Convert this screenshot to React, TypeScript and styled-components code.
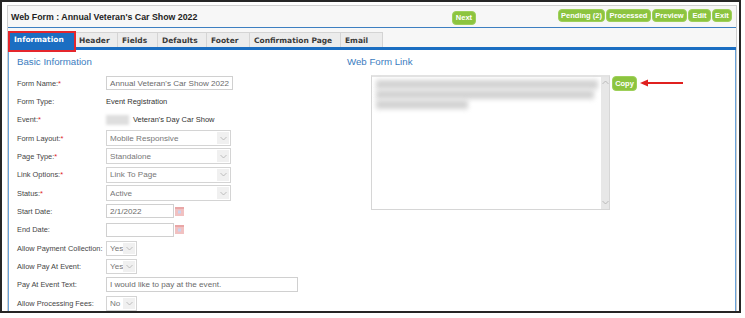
import React from "react";
import styled, { createGlobalStyle } from "styled-components";

const GlobalStyle = createGlobalStyle`
  html, body { margin: 0; padding: 0; background: #fff; }
  body { font-family: "Liberation Sans", Arial, sans-serif; }
`;

const Frame = styled.div`
  width: 741px;
  height: 313px;
  box-sizing: border-box;
  border: 2px solid #262626;
  padding: 3px 2px 0 5px;
  display: flex;
  background: #fff;
  overflow: hidden;
`;

const Panel = styled.div`
  flex: 1;
  min-width: 0;
  display: flex;
  flex-direction: column;
  border: 1px solid #cfcfcf;
  border-bottom: none;
  background: #f7f7f7;
`;

const HeaderBar = styled.div`
  height: 21px;
  flex-shrink: 0;
  display: flex;
  align-items: flex-start;
  padding: 0 4px 0 3px;
  border-bottom: 1px solid #3d7fc1;
`;

const Title = styled.div`
  align-self: center;
  width: 441px;
  font-size: 8.8px;
  font-weight: bold;
  color: #1e1e1e;
  white-space: nowrap;
`;

const Spacer = styled.div`
  flex: 1;
`;

const ButtonGroup = styled.div`
  display: flex;
  gap: 1px;
  margin-top: 3px;
`;

const GreenButton = styled.button<{ $h?: number; $top?: number; $w?: number }>`
  height: ${(p) => p.$h ?? 13}px;
  margin-top: ${(p) => p.$top ?? 0}px;
  ${(p) => (p.$w ? `width: ${p.$w}px;` : "")}
  padding: 0 2px;
  border: 1px solid #9ed05a;
  border-radius: 4px;
  background: #8cc43f;
  color: #fff;
  font-family: "Liberation Sans", Arial, sans-serif;
  font-size: 7.5px;
  font-weight: bold;
  line-height: 1;
  white-space: nowrap;
  display: flex;
  align-items: center;
  justify-content: center;
  cursor: pointer;
`;

const TabRow = styled.div`
  height: 19px;
  flex-shrink: 0;
  display: flex;
  align-items: flex-end;
  padding-left: 1px;
`;

const Tab = styled.div<{ $active?: boolean; $w: number }>`
  position: relative;
  width: ${(p) => p.$w}px;
  height: ${(p) => (p.$active ? 16 : 15)}px;
  box-sizing: border-box;
  padding: 0 4px;
  display: flex;
  align-items: center;
  font-family: "DejaVu Sans", Verdana, sans-serif;
  font-size: 7.5px;
  font-weight: bold;
  white-space: nowrap;
  color: ${(p) => (p.$active ? "#fff" : "#3a3a3a")};
  background: ${(p) => (p.$active ? "#1b6ec2" : "#ececec")};
  border: 1px solid ${(p) => (p.$active ? "#1b6ec2" : "#d4d4d4")};
  border-bottom: none;
  border-left-width: ${(p) => (p.$active ? 1 : 0)}px;

  ${(p) =>
    p.$active &&
    `&::after {
      content: "";
      position: absolute;
      left: -2px;
      right: -2px;
      top: -1px;
      bottom: -5px;
      border: 2px solid #e5262c;
      pointer-events: none;
      z-index: 2;
    }`}
`;

const BlueBar = styled.div`
  height: 3px;
  flex-shrink: 0;
  background: #1b6ec2;
`;

const Content = styled.div`
  flex: 1;
  min-height: 0;
  display: flex;
  background: #fff;
  border-left: 1px solid #6aa3da;
  border-right: 1px solid #6aa3da;
  overflow: hidden;
`;

const LeftCol = styled.div`
  width: 338px;
  flex-shrink: 0;
  box-sizing: border-box;
  padding: 6px 0 0 8px;
`;

const RightCol = styled.div`
  flex: 1;
  padding-top: 6px;
`;

const SectionTitle = styled.div`
  height: 12px;
  line-height: 12px;
  font-size: 9.7px;
  color: #3a7cc0;
  margin-bottom: 6px;
`;

const FormGrid = styled.div`
  display: grid;
  grid-template-columns: 89px 1fr;
  grid-auto-rows: 18.33px;
  align-items: center;
`;

const Label = styled.div`
  font-size: 7.4px;
  color: #454545;
  white-space: nowrap;
`;

const Req = styled.span`
  color: #e01b1b;
`;

const Value = styled.div`
  display: flex;
  align-items: center;
  font-size: 7.5px;
  color: #333;
  white-space: nowrap;
`;

const TextBox = styled.div<{ $w: number; $h?: number }>`
  width: ${(p) => p.$w}px;
  height: ${(p) => p.$h ?? 15}px;
  box-sizing: border-box;
  border: 1px solid #d0d0d0;
  padding: 0 3px;
  display: flex;
  align-items: center;
  font-size: 8.1px;
  color: #6a6a6a;
  white-space: nowrap;
  overflow: hidden;
`;

const SelectBox = styled.div<{ $w: number; $h?: number }>`
  width: ${(p) => p.$w}px;
  height: ${(p) => p.$h ?? 16}px;
  box-sizing: border-box;
  border: 1px solid #d4d4d4;
  padding: 1px 1px 1px 3px;
  display: flex;
  align-items: center;
  font-size: 8.1px;
  color: #777;
  white-space: nowrap;
  overflow: hidden;
`;

const SelectText = styled.span`
  flex: 1;
  overflow: hidden;
`;

const ArrowBox = styled.span`
  width: 12px;
  align-self: stretch;
  flex-shrink: 0;
  background: #f0f0f0;
  display: flex;
  align-items: center;
  justify-content: center;
`;

const BlurBox = styled.div<{ $w: number; $h: number }>`
  width: ${(p) => p.$w}px;
  height: ${(p) => p.$h}px;
  background: #dedede;
  filter: blur(1.5px);
  margin-right: 4px;
`;

const DateWrap = styled.div`
  display: flex;
  align-items: center;
  gap: 1px;
`;

const LinkRow = styled.div`
  display: flex;
  align-items: flex-start;
  margin: 7px 0 0 24px;
`;

const TextArea = styled.div`
  width: 239px;
  height: 135px;
  box-sizing: border-box;
  border: 1px solid #d6d6d6;
  border-top: 2px solid #e3e3e3;
  display: flex;
`;

const AreaBody = styled.div`
  flex: 1;
  padding: 3px 3px 0 4px;
`;

const BlurLine = styled.div<{ $w: number }>`
  width: ${(p) => p.$w}px;
  height: 9px;
  background: #d2d2d2;
  filter: blur(2.5px);
  margin-bottom: 1px;
`;

const ScrollBar = styled.div`
  width: 10px;
  background: #e7e7e7;
  display: flex;
  flex-direction: column;
  justify-content: space-between;
  align-items: center;
  padding: 3px 0 4px;
`;

const ArrowSvg = styled.svg`
  margin: 4px 0 0 3px;
  flex-shrink: 0;
`;

const Chevron = ({ up = false }: { up?: boolean }) => (
  <svg width="7" height="5" viewBox="0 0 7 5">
    <polyline
      points={up ? "0.5,4 3.5,1 6.5,4" : "0.5,1 3.5,4 6.5,1"}
      fill="none"
      stroke="#b0b0b0"
      strokeWidth="0.8"
    />
  </svg>
);

const CalIcon = () => (
  <svg width="9" height="9" viewBox="0 0 9 9">
    <rect x="0" y="0" width="9" height="9" fill="#f1c1c1" />
    <rect x="0" y="0" width="9" height="2" fill="#e9a6a6" />
    <rect x="3" y="3.5" width="3" height="3" fill="#c9d4f0" />
  </svg>
);

const Select = ({ w, h, text }: { w: number; h?: number; text: string }) => (
  <SelectBox $w={w} $h={h}>
    <SelectText>{text}</SelectText>
    <ArrowBox>
      <Chevron />
    </ArrowBox>
  </SelectBox>
);

const tabs = [
  { name: "Information", w: 66 },
  { name: "Header", w: 43 },
  { name: "Fields", w: 40 },
  { name: "Defaults", w: 49 },
  { name: "Footer", w: 43 },
  { name: "Confirmation Page", w: 91 },
  { name: "Email", w: 42 },
];

export default function App() {
  return (
    <>
      <GlobalStyle />
      <Frame>
        <Panel>
          <HeaderBar>
            <Title>Web Form : Annual Veteran's Car Show 2022</Title>
            <GreenButton $h={14} $top={5} $w={24}>
              Next
            </GreenButton>
            <Spacer />
            <ButtonGroup>
              <GreenButton $w={47}>Pending (2)</GreenButton>
              <GreenButton $w={45}>Processed</GreenButton>
              <GreenButton $w={35}>Preview</GreenButton>
              <GreenButton $w={23}>Edit</GreenButton>
              <GreenButton $w={20}>Exit</GreenButton>
            </ButtonGroup>
          </HeaderBar>

          <TabRow>
            {tabs.map((t, i) => (
              <Tab key={t.name} $w={t.w} $active={i === 0}>
                {t.name}
              </Tab>
            ))}
          </TabRow>
          <BlueBar />

          <Content>
            <LeftCol>
              <SectionTitle>Basic Information</SectionTitle>
              <FormGrid>
                <Label>
                  Form Name:<Req>*</Req>
                </Label>
                <TextBox $w={127} $h={14}>
                  Annual Veteran's Car Show 2022
                </TextBox>

                <Label>Form Type:</Label>
                <Value>Event Registration</Value>

                <Label>
                  Event:<Req>*</Req>
                </Label>
                <Value>
                  <BlurBox $w={23} $h={10} />
                  Veteran's Day Car Show
                </Value>

                <Label>
                  Form Layout:<Req>*</Req>
                </Label>
                <Select w={125} text="Mobile Responsive" />

                <Label>
                  Page Type:<Req>*</Req>
                </Label>
                <Select w={125} text="Standalone" />

                <Label>
                  Link Options:<Req>*</Req>
                </Label>
                <Select w={125} text="Link To Page" />

                <Label>
                  Status:<Req>*</Req>
                </Label>
                <Select w={125} text="Active" />

                <Label>Start Date:</Label>
                <DateWrap>
                  <TextBox $w={68} $h={14}>
                    2/1/2022
                  </TextBox>
                  <CalIcon />
                </DateWrap>

                <Label>End Date:</Label>
                <DateWrap>
                  <TextBox $w={68} $h={14} />
                  <CalIcon />
                </DateWrap>

                <Label>Allow Payment Collection:</Label>
                <Select w={31} h={15} text="Yes" />

                <Label>Allow Pay At Event:</Label>
                <Select w={31} h={15} text="Yes" />

                <Label>Pay At Event Text:</Label>
                <TextBox $w={192}>I would like to pay at the event.</TextBox>

                <Label>Allow Processing Fees:</Label>
                <Select w={31} h={15} text="No" />
              </FormGrid>
            </LeftCol>

            <RightCol>
              <SectionTitle>Web Form Link</SectionTitle>
              <LinkRow>
                <TextArea>
                  <AreaBody>
                    <BlurLine $w={222} />
                    <BlurLine $w={218} />
                    <BlurLine $w={92} />
                  </AreaBody>
                  <ScrollBar>
                    <Chevron up />
                    <Chevron />
                  </ScrollBar>
                </TextArea>
                <GreenButton $h={15} $w={25} style={{ marginLeft: 2, marginTop: 1 }}>
                  Copy
                </GreenButton>
                <ArrowSvg width="44" height="8" viewBox="0 0 44 8">
                  <line x1="6" y1="4" x2="43" y2="4" stroke="#e0201f" strokeWidth="2" />
                  <polygon points="0,4 8,0.5 8,7.5" fill="#e0201f" />
                </ArrowSvg>
              </LinkRow>
            </RightCol>
          </Content>
        </Panel>
      </Frame>
    </>
  );
}
